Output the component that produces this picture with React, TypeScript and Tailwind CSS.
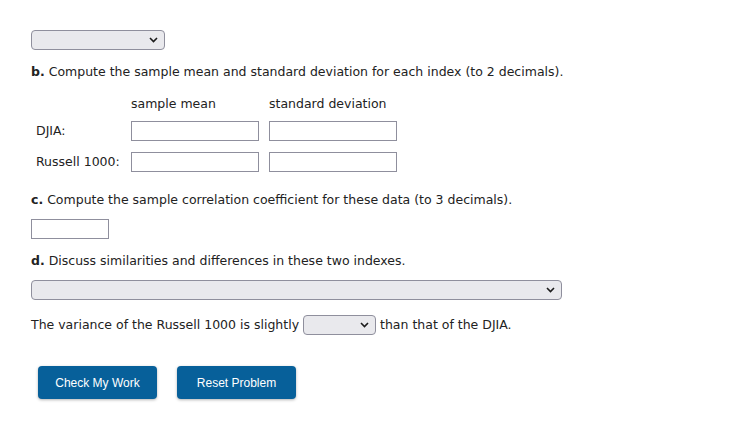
import React from "react";

function Chevron() {
  return (
    <svg width="9" height="6" viewBox="0 0 9 6" className="shrink-0">
      <path d="M1 1 L4.5 4.5 L8 1" fill="none" stroke="#1b1b1b" strokeWidth="1.6" />
    </svg>
  );
}

function FakeSelect({ width }: { width: string }) {
  return (
    <div
      className={`flex h-[20px] ${width} items-center justify-end rounded-[4px] border border-[#8f8f9d] bg-[#e9e9ed] pr-[6px]`}
    >
      <Chevron />
    </div>
  );
}

function Box({ width }: { width: string }) {
  return <div className={`h-[20px] ${width} border border-[#8f8f9d] bg-white`} />;
}

export default function App() {
  return (
    <div
      className="min-h-screen bg-white pl-[31px] pt-[30px] text-[12.5px] leading-[16px] text-[#222]"
      style={{ fontFamily: '"DejaVu Sans", Verdana, sans-serif' }}
    >
      <FakeSelect width="w-[134px]" />

      <p className="mt-[14px]">
        <b>b.</b> Compute the sample mean and standard deviation for each index (to 2 decimals).
      </p>

      {/* table */}
      <div className="mt-[16px] flex">
        <div className="w-[100px]" />
        <div className="w-[138px]">sample mean</div>
        <div>standard deviation</div>
      </div>
      <div className="mt-[9px] flex items-center">
        <div className="w-[100px] pl-[5px]">DJIA:</div>
        <Box width="w-[128px]" />
        <div className="w-[10px]" />
        <Box width="w-[128px]" />
      </div>
      <div className="mt-[11px] flex items-center">
        <div className="w-[100px] pl-[5px]">Russell 1000:</div>
        <Box width="w-[128px]" />
        <div className="w-[10px]" />
        <Box width="w-[128px]" />
      </div>

      <p className="mt-[20px]">
        <b>c.</b> Compute the sample correlation coefficient for these data (to 3 decimals).
      </p>
      <div className="mt-[11px]">
        <Box width="w-[78px]" />
      </div>

      <p className="mt-[14px]">
        <b>d.</b> Discuss similarities and differences in these two indexes.
      </p>
      <div className="mt-[11px]">
        <FakeSelect width="w-[531px]" />
      </div>

      <div className="mt-[15px] flex h-[20px] items-center">
        <span>The variance of the Russell 1000 is slightly</span>
        <div className="ml-[4px] mr-[4px]">
          <FakeSelect width="w-[73px]" />
        </div>
        <span>than that of the DJIA.</span>
      </div>

      <div
        className="ml-[7px] mt-[31px] flex gap-[20px] text-[12px] text-white"
        style={{ fontFamily: '"Liberation Sans", Arial, sans-serif' }}
      >
        <button className="h-[33px] w-[119px] rounded-[4px] bg-[#07609a] shadow-[0_1px_3px_rgba(0,0,0,0.3)]">
          Check My Work
        </button>
        <button className="h-[33px] w-[119px] rounded-[4px] bg-[#07609a] shadow-[0_1px_3px_rgba(0,0,0,0.3)]">
          Reset Problem
        </button>
      </div>
    </div>
  );
}
